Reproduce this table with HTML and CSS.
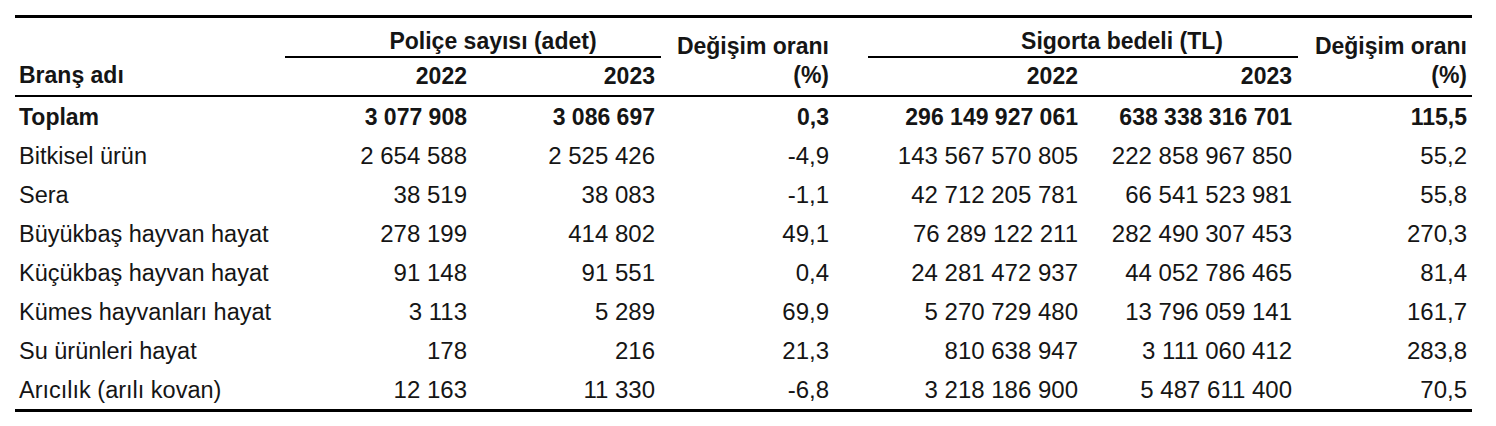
FILE: index.html
```html
<!DOCTYPE html>
<html lang="tr">
<head>
<meta charset="utf-8">
<title>Tarım sigortası</title>
<link rel="stylesheet" href="styles.css">
</head>
<body>
<table class="stats">
  <colgroup>
    <col class="c1"><col class="c2"><col class="c3"><col class="c4"><col class="c5"><col class="c6"><col class="c7">
  </colgroup>
  <thead>
    <tr class="h1">
      <th rowspan="2" class="label head-span">Branş adı</th>
      <th colspan="2" class="group group-pol">Poliçe sayısı (adet)</th>
      <th rowspan="2" class="num head-span p4">Değişim oranı<br>(%)</th>
      <th colspan="2" class="group group-sig">Sigorta bedeli (TL)</th>
      <th rowspan="2" class="num head-span p7">Değişim oranı<br>(%)</th>
    </tr>
    <tr class="h2">
      <th class="num year p2">2022</th>
      <th class="num year p3">2023</th>
      <th class="num year p5">2022</th>
      <th class="num year p6">2023</th>
    </tr>
  </thead>
  <tbody>
    <tr class="total">
      <td class="label">Toplam</td>
      <td class="num p2">3 077 908</td>
      <td class="num p3">3 086 697</td>
      <td class="num p4">0,3</td>
      <td class="num p5">296 149 927 061</td>
      <td class="num p6">638 338 316 701</td>
      <td class="num p7">115,5</td>
    </tr>
    <tr>
      <td class="label">Bitkisel ürün</td>
      <td class="num p2">2 654 588</td>
      <td class="num p3">2 525 426</td>
      <td class="num p4">-4,9</td>
      <td class="num p5">143 567 570 805</td>
      <td class="num p6">222 858 967 850</td>
      <td class="num p7">55,2</td>
    </tr>
    <tr>
      <td class="label">Sera</td>
      <td class="num p2">38 519</td>
      <td class="num p3">38 083</td>
      <td class="num p4">-1,1</td>
      <td class="num p5">42 712 205 781</td>
      <td class="num p6">66 541 523 981</td>
      <td class="num p7">55,8</td>
    </tr>
    <tr>
      <td class="label">Büyükbaş hayvan hayat</td>
      <td class="num p2">278 199</td>
      <td class="num p3">414 802</td>
      <td class="num p4">49,1</td>
      <td class="num p5">76 289 122 211</td>
      <td class="num p6">282 490 307 453</td>
      <td class="num p7">270,3</td>
    </tr>
    <tr>
      <td class="label">Küçükbaş hayvan hayat</td>
      <td class="num p2">91 148</td>
      <td class="num p3">91 551</td>
      <td class="num p4">0,4</td>
      <td class="num p5">24 281 472 937</td>
      <td class="num p6">44 052 786 465</td>
      <td class="num p7">81,4</td>
    </tr>
    <tr>
      <td class="label">Kümes hayvanları hayat</td>
      <td class="num p2">3 113</td>
      <td class="num p3">5 289</td>
      <td class="num p4">69,9</td>
      <td class="num p5">5 270 729 480</td>
      <td class="num p6">13 796 059 141</td>
      <td class="num p7">161,7</td>
    </tr>
    <tr>
      <td class="label">Su ürünleri hayat</td>
      <td class="num p2">178</td>
      <td class="num p3">216</td>
      <td class="num p4">21,3</td>
      <td class="num p5">810 638 947</td>
      <td class="num p6">3 111 060 412</td>
      <td class="num p7">283,8</td>
    </tr>
    <tr>
      <td class="label">Arıcılık (arılı kovan)</td>
      <td class="num p2">12 163</td>
      <td class="num p3">11 330</td>
      <td class="num p4">-6,8</td>
      <td class="num p5">3 218 186 900</td>
      <td class="num p6">5 487 611 400</td>
      <td class="num p7">70,5</td>
    </tr>
  </tbody>
</table>
</body>
</html>
```
FILE: styles.css
```css
html, body {
  margin: 0;
  padding: 0;
  background: #ffffff;
}

body {
  padding: 15px 0 0 15px;
  font-family: "Liberation Sans", Arial, sans-serif;
  color: #151515;
}

.stats {
  width: 1457px;
  table-layout: fixed;
  border-collapse: separate;
  border-spacing: 0;
  border-top: 3px solid #000;
  border-bottom: 3px solid #000;
  font-size: 23px;
}

.c1 { width: 270px; }
.c2 { width: 190px; }
.c3 { width: 186px; }
.c4 { width: 207px; }
.c5 { width: 218px; }
.c6 { width: 212px; }
.c7 { width: 174px; }

th, td {
  padding: 0;
  white-space: nowrap;
}

th {
  font-weight: bold;
}

.label {
  text-align: left;
  padding-left: 4px;
}

.num {
  text-align: right;
}

.p2 { padding-right: 8px; }
.p3 { padding-right: 6px; }
.p4 { padding-right: 39px; }
.p5 { padding-right: 8px; }
.p6 { padding-right: 6px; }
.p7 { padding-right: 5px; }

.h1 { height: 40px; }
.h2 { height: 39px; }

.head-span {
  vertical-align: bottom;
  line-height: 29px;
  padding-bottom: 5px;
  border-bottom: 2px solid #000;
}

.group {
  vertical-align: bottom;
  line-height: 26px;
  padding-bottom: 2px;
  border-bottom: 2px solid #000;
  text-align: center;
}

.group-pol { padding-left: 40px; }
.group-sig { padding-left: 78px; }

.year {
  vertical-align: bottom;
  line-height: 26px;
  padding-bottom: 6px;
  border-bottom: 2px solid #000;
}

tbody tr {
  height: 39px;
}

tbody td {
  vertical-align: middle;
  line-height: 26px;
  font-size: 24px;
}

tbody td.label {
  font-size: 23.5px;
}

.total td,
.total td.label {
  font-weight: bold;
  font-size: 23px;
}
```
